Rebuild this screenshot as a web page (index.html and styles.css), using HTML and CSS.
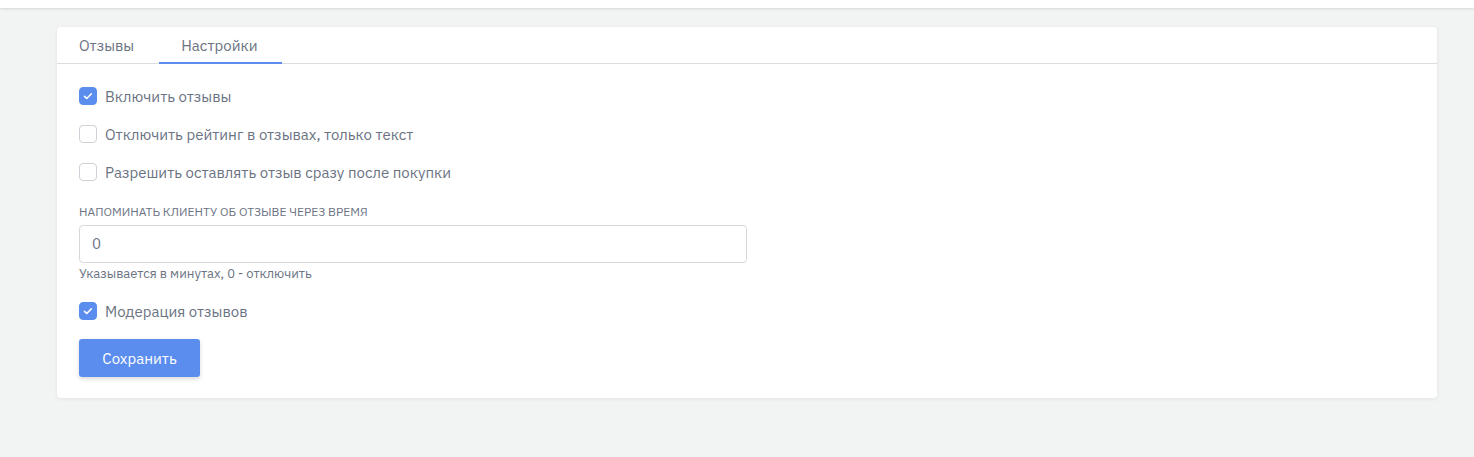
FILE: index.html
```html
<!DOCTYPE html>
<html lang="ru">
<head>
<meta charset="utf-8">
<title>Настройки отзывов</title>
<link rel="stylesheet" href="styles.css">
</head>
<body>
<div class="topbar"></div>
<main class="page">
  <section class="card">
    <nav class="tabs">
      <div class="tab">Отзывы</div>
      <div class="tab active">Настройки</div>
    </nav>
    <div class="body">
      <label class="check"><span class="box on"><svg viewBox="0 0 18 18" width="18" height="18"><path d="M5.5 9.3l2.3 2.2 4.6-4.7" fill="none" stroke="#fff" stroke-width="1.6" stroke-linecap="round" stroke-linejoin="round"/></svg></span><span class="text">Включить отзывы</span></label>
      <label class="check"><span class="box"></span><span class="text">Отключить рейтинг в отзывах, только текст</span></label>
      <label class="check"><span class="box"></span><span class="text">Разрешить оставлять отзыв сразу после покупки</span></label>
      <div class="field">
        <div class="label">НАПОМИНАТЬ КЛИЕНТУ ОБ ОТЗЫВЕ ЧЕРЕЗ ВРЕМЯ</div>
        <div class="input">0</div>
        <div class="help">Указывается в минутах, 0 - отключить</div>
      </div>
      <label class="check"><span class="box on"><svg viewBox="0 0 18 18" width="18" height="18"><path d="M5.5 9.3l2.3 2.2 4.6-4.7" fill="none" stroke="#fff" stroke-width="1.6" stroke-linecap="round" stroke-linejoin="round"/></svg></span><span class="text">Модерация отзывов</span></label>
      <div class="actions"><button class="btn">Сохранить</button></div>
    </div>
  </section>
</main>
</body>
</html>
```
FILE: styles.css
```css
* { box-sizing: border-box; }
html, body { margin: 0; padding: 0; }
body {
  background: #f2f3f3;
  font-family: "IBM Plex Sans", Inter, "Noto Sans", sans-serif;
  color: #6b7383;
  height: 457px;
  overflow: hidden;
}
.topbar {
  height: 8px;
  background: #fff;
  box-shadow: 0 1px 3px rgba(0,0,0,0.12);
}
.page {
  padding: 19px 37px 0 57px;
}
.card {
  background: #fff;
  border-radius: 4px;
  box-shadow: 0 1px 4px rgba(0,0,0,0.07);
  height: 371px;
}
.tabs {
  display: flex;
  height: 37px;
  border-bottom: 1px solid #dcdde0;
}
.tab {
  padding: 0 25px 0 22px;
  font-size: 15px;
  line-height: 37px;
  color: #6b7383;
  margin-bottom: -1px;
  border-bottom: 2px solid transparent;
}
.tab.active {
  border-bottom-color: #5b8def;
  padding-right: 24px;
}
.body {
  padding: 23px 22px 21px;
}
.check {
  display: flex;
  align-items: center;
  gap: 8px;
  height: 18px;
  margin-bottom: 20px;
}
.box {
  width: 18px;
  height: 18px;
  border: 1px solid #cfd2d8;
  border-radius: 4px;
  background: #fff;
  display: flex;
}
.box.on {
  background: #5b8def;
  border-color: #5b8def;
}
.box svg { margin: -1px; }
.text {
  font-size: 15px;
  color: #6b7383;
}
.field {
  margin-top: 24px;
  margin-bottom: 20px;
}
.label {
  font-size: 12px;
  color: #6b7383;
  line-height: 14px;
  margin-bottom: 6px;
}
.input {
  width: 668px;
  height: 38px;
  border: 1px solid #d6d7dc;
  border-radius: 4px;
  padding: 0 12px;
  font-size: 15px;
  line-height: 36px;
  color: #6b7383;
}
.help {
  font-size: 13px;
  color: #6b7383;
  line-height: 16px;
  margin-top: 3px;
}
.actions { margin-top: -1px; }
.btn {
  width: 121px;
  height: 38px;
  border: 0;
  border-radius: 3px;
  background: #5b8def;
  color: #fff;
  font-family: inherit;
  font-size: 15px;
  box-shadow: 0 2px 4px rgba(0,0,0,0.15);
}
```
